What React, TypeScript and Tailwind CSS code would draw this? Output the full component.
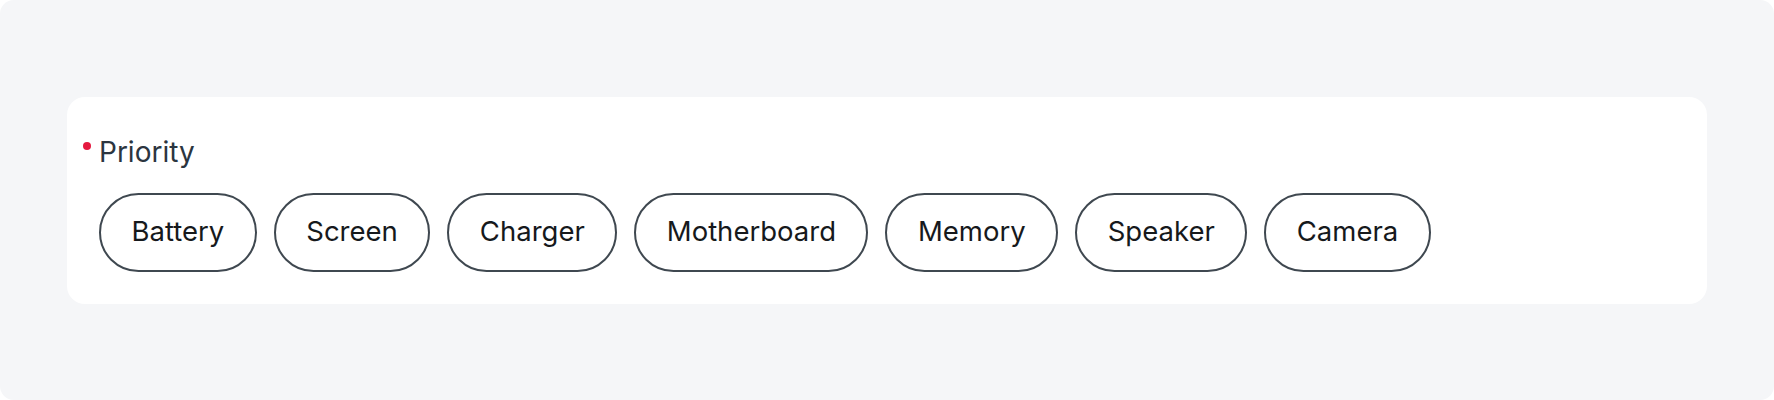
import React from "react";

const items = ["Battery", "Screen", "Charger", "Motherboard", "Memory", "Speaker", "Camera"];

export default function App() {
  return (
    <div className="w-[1774px] h-[400px] bg-white" style={{ fontFamily: "Inter, 'Noto Sans', sans-serif" }}>
      <div className="w-full h-full bg-[#f5f6f8] rounded-[14px] flex items-center px-[67px]">
        <div className="w-full h-[207px] bg-white rounded-[18px] pt-[39px] pb-[32px]">
          <div className="flex items-start pl-4">
            <span className="w-2 h-2 rounded-full bg-[#e5193f] mt-[6px]"></span>
            <span className="ml-[8px] text-[28px] leading-[32px] text-[#2b3540]">Priority</span>
          </div>
          <div className="flex gap-[17px] pl-8 mt-[25px]">
            {items.map((t) => (
              <button
                key={t}
                className="h-[79px] px-[30.5px] border-2 border-[#3f4850] rounded-full text-[27.5px] text-[#16191c] bg-white flex items-center"
              >
                {t}
              </button>
            ))}
          </div>
        </div>
      </div>
    </div>
  );
}
